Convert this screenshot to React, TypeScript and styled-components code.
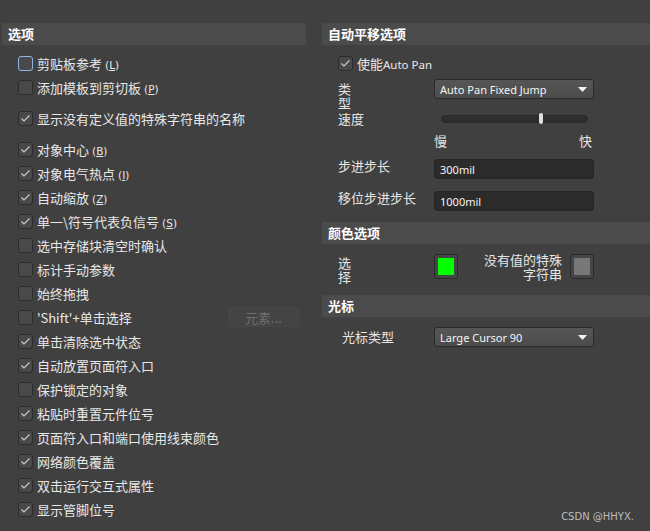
import { createGlobalStyle, styled } from "styled-components"

const GlobalStyle = createGlobalStyle`
  html, body {
    margin: 0;
    padding: 0;
    background: #404040;
  }
  body {
    font-family: "Noto Sans CJK SC", "Noto Sans", sans-serif;
    font-size: 13px;
    color: #e6e6e6;
  }
`

type OptionType = {
    label: string
    key?: string
    checked: boolean
    focus?: boolean
    gap?: number
    button?: string
}

const options: OptionType[] = [
    { label: "剪贴板参考", key: "L", checked: false, focus: true },
    { label: "添加模板到剪切板", key: "P", checked: false },
    { label: "显示没有定义值的特殊字符串的名称", checked: true, gap: 7 },
    { label: "对象中心", key: "B", checked: true, gap: 7 },
    { label: "对象电气热点", key: "I", checked: true },
    { label: "自动缩放", key: "Z", checked: true },
    { label: "单一\\符号代表负信号", key: "S", checked: true },
    { label: "选中存储块清空时确认", checked: false },
    { label: "标计手动参数", checked: false },
    { label: "始终拖拽", checked: false },
    { label: "'Shift'+单击选择", checked: false, button: "元素..." },
    { label: "单击清除选中状态", checked: true },
    { label: "自动放置页面符入口", checked: true },
    { label: "保护锁定的对象", checked: false },
    { label: "粘贴时重置元件位号", checked: true },
    { label: "页面符入口和端口使用线束颜色", checked: true },
    { label: "网络颜色覆盖", checked: true },
    { label: "双击运行交互式属性", checked: true },
    { label: "显示管脚位号", checked: true },
]

const CheckBox = (props: { checked: boolean; focus?: boolean }) => {
    return (
        <Box $focus={props.focus}>
            {props.checked && (
                <svg width="11" height="9" viewBox="0 0 11 9">
                    <polyline points="1.5,4.5 4,7 9.5,1.5" fill="none" stroke="#cfcfcf" strokeWidth="1.1" />
                </svg>
            )}
        </Box>
    )
}

const Arrow = () => (
    <svg width="9" height="5" viewBox="0 0 9 5">
        <polygon points="0,0 9,0 4.5,5" fill="#f2f2f2" />
    </svg>
)

export default function App() {
    const speed = 67

    return (
        <>
            <GlobalStyle />
            <Page>
                <LeftColumn>
                    <Header>选项</Header>
                    <List>
                        {options.map((o) => (
                            <Row key={o.label} $gap={o.gap || 0}>
                                <CheckBox checked={o.checked} focus={o.focus} />
                                <Label>
                                    {o.label}
                                    {o.key && (
                                        <HotKey>
                                            (<u>{o.key}</u>)
                                        </HotKey>
                                    )}
                                </Label>
                                {o.button && <GhostButton>{o.button}</GhostButton>}
                            </Row>
                        ))}
                    </List>
                </LeftColumn>

                <RightColumn>
                    <Header>自动平移选项</Header>
                    <Form>
                        <Row $gap={0}>
                            <CheckBox checked={true} />
                            <Label>
                                使能<Latin>Auto Pan</Latin>
                            </Label>
                        </Row>

                        <FormRow $gap={4}>
                            <FieldLabel $narrow $top={3}>类型</FieldLabel>
                            <Select>
                                <span>Auto Pan Fixed Jump</span>
                                <Arrow />
                            </Select>
                        </FormRow>

                        <FormRow $gap={3}>
                            <FieldLabel $top={0}>速度</FieldLabel>
                            <SliderBox>
                                <Track>
                                    <Thumb style={{ left: speed + "%" }} />
                                </Track>
                            </SliderBox>
                        </FormRow>

                        <FormRow $gap={7}>
                            <FieldLabel $top={0} />
                            <Scale>
                                <span>慢</span>
                                <span>快</span>
                            </Scale>
                        </FormRow>

                        <FormRow $gap={10}>
                            <FieldLabel $top={0}>步进步长</FieldLabel>
                            <Input>300mil</Input>
                        </FormRow>

                        <FormRow $gap={12}>
                            <FieldLabel $top={0}>移位步进步长</FieldLabel>
                            <Input>1000mil</Input>
                        </FormRow>
                    </Form>

                    <Header $gap={11}>颜色选项</Header>
                    <Form>
                        <FormRow $gap={10}>
                            <FieldLabel $narrow $top={2}>选择</FieldLabel>
                            <ColorGroup>
                                <Swatch>
                                    <SwatchFill $color="#00ff00" />
                                </Swatch>
                                <SideLabel>
                                    没有值的特殊
                                    <br />
                                    字符串
                                </SideLabel>
                                <Swatch>
                                    <SwatchFill $color="#777777" />
                                </Swatch>
                            </ColorGroup>
                        </FormRow>
                    </Form>

                    <Header $gap={12}>光标</Header>
                    <Form>
                        <FormRow $gap={10} $center>
                            <FieldLabel $top={0} $indent={4}>光标类型</FieldLabel>
                            <Select>
                                <span>Large Cursor 90</span>
                                <Arrow />
                            </Select>
                        </FormRow>
                    </Form>
                </RightColumn>
            </Page>
            <Watermark>CSDN @HHYX.</Watermark>
        </>
    )
}

const Page = styled.div`
  display: flex;
  width: 650px;
  height: 531px;
  padding: 23px 0 0 2px;
  box-sizing: border-box;
  overflow: hidden;
`

const LeftColumn = styled.div`
  width: 304px;
  flex-shrink: 0;
`

const RightColumn = styled.div`
  flex: 1;
  margin-left: 16px;
`

const Header = styled.div<{ $gap?: number }>`
  height: 22px;
  line-height: 22px;
  margin-top: ${props => props.$gap || 0}px;
  padding-left: 6px;
  background: #4b4b4b;
  color: #ffffff;
  font-weight: bold;
  font-size: 13px;
`

const List = styled.div`
  padding-left: 16px;
`

const Form = styled.div`
  padding-left: 16px;
`

const Row = styled.div<{ $gap: number }>`
  display: flex;
  align-items: center;
  height: 24px;
  margin-top: ${props => props.$gap}px;
  &:first-child {
    margin-top: 6px;
  }
`

const Box = styled.div<{ $focus?: boolean }>`
  width: 15px;
  height: 15px;
  box-sizing: border-box;
  border: 1px solid ${props => props.$focus ? "#8db6e2" : "#2c2c2c"};
  border-radius: 3px;
  background: #494949;
  display: flex;
  align-items: center;
  justify-content: center;
  flex-shrink: 0;
`

const Label = styled.span`
  margin-left: 4px;
  white-space: nowrap;
  color: #e8e8e8;
`

const Latin = styled.span`
  font-family: "Noto Sans", sans-serif;
  font-size: 11.5px;
`

const HotKey = styled.span`
  margin-left: 3px;
  font-family: "DejaVu Sans", sans-serif;
  font-size: 10.5px;
`

const GhostButton = styled.div`
  margin-left: auto;
  margin-right: 7px;
  width: 71px;
  height: 20px;
  box-sizing: border-box;
  border: 1px solid #474747;
  border-radius: 3px;
  background: #444444;
  color: #6e6e6e;
  display: flex;
  align-items: center;
  justify-content: center;
`

const FormRow = styled.div<{ $gap: number; $center?: boolean }>`
  display: flex;
  align-items: ${props => props.$center ? "center" : "flex-start"};
  margin-top: ${props => props.$gap}px;
`

const FieldLabel = styled.div<{ $top: number; $narrow?: boolean; $indent?: number }>`
  width: 96px;
  flex-shrink: 0;
  box-sizing: border-box;
  padding-left: ${props => props.$indent || 0}px;
  padding-top: ${props => props.$top}px;
  line-height: ${props => props.$narrow ? "13.5px" : "14px"};
  color: #e6e6e6;
  word-break: break-all;
  ${props => props.$narrow && "padding-right: 82px;"}
`

const Select = styled.div`
  width: 160px;
  height: 20px;
  box-sizing: border-box;
  border: 1px solid #2a2a2a;
  border-radius: 3px;
  background: linear-gradient(#565656, #4c4c4c);
  display: flex;
  align-items: center;
  justify-content: space-between;
  padding: 0 6px 0 5px;
  font-family: "Noto Sans", sans-serif;
  font-size: 11px;
  color: #f4f4f4;
`

const SliderBox = styled.div`
  width: 160px;
  height: 14px;
  padding: 0 6px 0 7px;
  box-sizing: border-box;
  display: flex;
  align-items: center;
`

const Track = styled.div`
  position: relative;
  flex: 1;
  height: 8px;
  box-sizing: border-box;
  border: 1px solid #292929;
  border-radius: 4px;
  background: #2e2e2e;
`

const Thumb = styled.div`
  position: absolute;
  top: -3px;
  width: 4px;
  height: 11px;
  border-radius: 2px;
  background: #dedede;
`

const Scale = styled.div`
  width: 158px;
  display: flex;
  justify-content: space-between;
  line-height: 16px;
`

const Input = styled.div`
  width: 160px;
  height: 20px;
  box-sizing: border-box;
  border: 1px solid #262626;
  border-radius: 3px;
  background: #2b2b2b;
  padding-left: 5px;
  display: flex;
  align-items: center;
  font-family: "Noto Sans", sans-serif;
  font-size: 11px;
  color: #f4f4f4;
`

const ColorGroup = styled.div`
  width: 160px;
  display: flex;
  align-items: flex-start;
`

const Swatch = styled.div`
  width: 24px;
  height: 25px;
  box-sizing: border-box;
  border: 1px solid #2a2a2a;
  border-radius: 3px;
  background: #454545;
  padding: 3px;
  flex-shrink: 0;
`

const SwatchFill = styled.div<{ $color: string }>`
  width: 100%;
  height: 100%;
  background: ${props => props.$color};
`

const SideLabel = styled.div`
  margin: -1px 8px 0 auto;
  text-align: right;
  line-height: 14px;
`

const Watermark = styled.div`
  position: absolute;
  right: 16px;
  bottom: 9px;
  font-family: "DejaVu Sans", sans-serif;
  font-size: 10px;
  color: #bdbdbd;
`
